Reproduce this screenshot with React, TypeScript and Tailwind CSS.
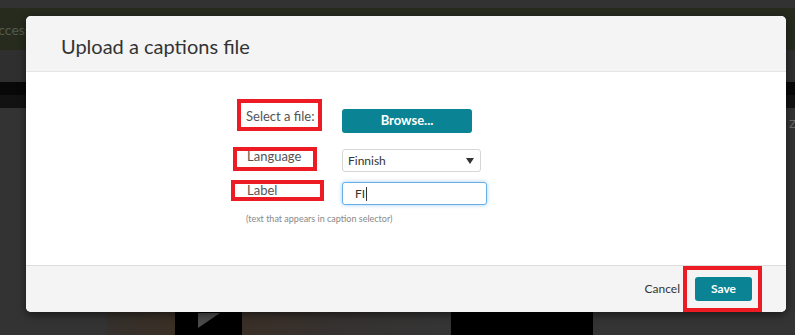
/**
 * Upload captions dialog over a dimmed video page
 */

function Backdrop() {
  return (
    <div className="flex h-full flex-col">
      <div className="h-[8px] bg-[#323232]" />
      <div className="flex h-[42px] items-center bg-[#262b1e]">
        <span className="-ml-[17px] text-[14px] text-[#555a4c]">Success</span>
      </div>
      <div className="h-[32px] bg-[#2f2f2f]" />
      <div className="h-[13px] bg-[#080808]" />
      <div className="h-[13px] bg-[#121212]" />
      <div className="flex-1 bg-[#333333] pl-[789px] pt-[2px]">
        <span className="text-[12px] leading-none text-[#6b6b6b]">Z</span>
      </div>

      {/* video thumbnails peeking out under the dialog */}
      <div className="flex h-[23px]">
        <div className="w-[107px] bg-[#333333]" />
        <div className="w-[68px] bg-gradient-to-r from-[#34302c] to-[#3b2f25]" />
        <div className="w-[67px] bg-black pl-[23px]">
          <svg width="23" height="16" viewBox="0 0 23 16" className="mt-[1px]">
            <polygon points="0,0 22,0 0,15" fill="#4b4b4b" />
          </svg>
        </div>
        <div className="w-[209px] bg-gradient-to-r from-[#3a2f27] via-[#353231] to-[#353535]" />
        <div className="w-[142px] bg-black" />
        <div className="flex-1 bg-[#343434]" />
      </div>
    </div>
  );
}

function UploadCaptionsDialog() {
  return (
    <div className="absolute left-[26px] top-[16px] w-[760px] overflow-hidden rounded-[5px] bg-white shadow-[0_3px_9px_rgba(0,0,0,0.5)]">
      {/* Header */}
      <div className="flex h-[56px] items-center border-b border-[#e5e5e5] bg-[#f4f4f4] px-[35px] pt-[4px]">
        <h2 className="text-[20px] text-[#333333]">Upload a captions file</h2>
      </div>

      {/* Body */}
      <div className="h-[193px] pl-[205px] pt-[27px]">
        {/* Select a file */}
        <div className="flex h-[34px]">
          <div className="w-[111px]">
            <div className="ml-[6px] h-[32px] w-[85px] whitespace-nowrap border-4 border-[#ed1c24] pl-[5px] pt-[6px] text-[13px] leading-[14px] text-[#555555]">
              Select a file:
            </div>
          </div>
          <button className="mt-[10px] h-[24px] w-[130px] rounded-[3px] bg-[#0a8494] text-[13px] font-bold text-white">
            Browse...
          </button>
        </div>

        {/* Language */}
        <div className="mt-[14px] flex h-[25px]">
          <div className="w-[111px]">
            <div className="ml-[2px] h-[24px] w-[84px] whitespace-nowrap border-4 border-[#ed1c24] pl-[10px] text-[13px] leading-[11px] text-[#555555]">
              Language
            </div>
          </div>
          <div className="mt-[2px] flex h-[23px] w-[139px] items-center justify-between rounded-[3px] border border-[#d6d6d6] bg-white pl-[5px] pr-[6px] text-[12px] text-[#333333]">
            <span>Finnish</span>
            <svg width="8" height="6" viewBox="0 0 8 6">
              <polygon points="0,0 8,0 4,6" fill="#333333" />
            </svg>
          </div>
        </div>

        {/* Label */}
        <div className="mt-[8px] flex h-[25px]">
          <div className="w-[111px]">
            <div className="h-[21px] w-[93px] whitespace-nowrap border-4 border-[#ed1c24] pl-[12px] text-[13px] leading-[12px] text-[#555555]">
              Label
            </div>
          </div>
          <div className="mt-[2px] flex h-[23px] w-[145px] items-center rounded-[3px] border border-[#66afe9] bg-white pl-[12px] text-[12px] text-[#333333] shadow-[0_0_4px_rgba(102,175,233,0.6)]">
            FI
            <span className="ml-[1px] h-[14px] w-[1px] bg-[#333333]" />
          </div>
        </div>

        <p className="ml-[15px] mt-[8px] text-[9px] leading-[12px] text-[#888888]">
          (text that appears in caption selector)
        </p>
      </div>

      {/* Footer */}
      <div className="flex h-[47px] items-stretch justify-end border-t border-[#dddddd] bg-[#f4f4f4] pr-[24px]">
        <button className="mr-[3px] self-center text-[12px] text-[#333333]">Cancel</button>
        <div className="flex w-[79px] items-center border-4 border-[#ed1c24] pl-[8px]">
          <button className="h-[24px] w-[57px] rounded-[3px] bg-[#0a8494] text-[12px] font-bold text-white">
            Save
          </button>
        </div>
      </div>
    </div>
  );
}

export default function App() {
  return (
    <div className="relative h-[335px] w-[795px] overflow-hidden bg-[#333333] font-['Lato',sans-serif]">
      <Backdrop />
      <UploadCaptionsDialog />
    </div>
  );
}
